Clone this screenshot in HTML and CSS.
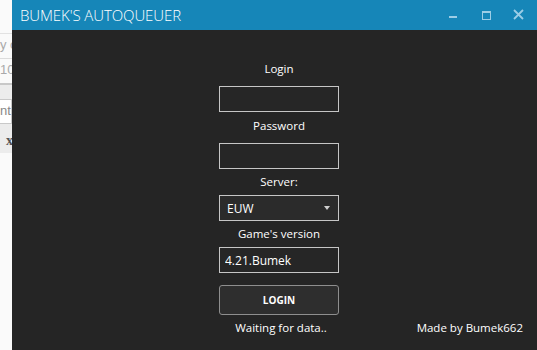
FILE: index.html
```html
<!DOCTYPE html>
<html lang="en">
<head>
    <meta charset="UTF-8">
    <meta name="viewport" content="width=device-width, initial-scale=1.0">
    <title>Bumek's Autoqueuer</title>
<link rel="stylesheet" href="styles.css">
</head>
<body>
    <div class="behind">
        <div class="behind-top"></div>
        <div class="behind-line">y c</div>
        <div class="behind-line">10</div>
        <div class="behind-gray">
            <div class="behind-box">nt</div>
            <div class="behind-x">x</div>
        </div>
    </div>
    <div class="window">
        <div class="title-bar">
            <div class="title">BUMEK'S AUTOQUEUER</div>
            <div class="controls">
                <svg width="30" height="30" viewBox="0 0 30 30"><rect x="9" y="16" width="8" height="2" fill="#9ccde6"/></svg>
                <svg width="30" height="30" viewBox="0 0 30 30"><rect x="10.5" y="11.5" width="8" height="8" fill="none" stroke="#9ccde6"/><rect x="10" y="11" width="9" height="2" fill="#9ccde6"/></svg>
                <svg width="30" height="30" viewBox="0 0 30 30"><path d="M10 10 L19 19 M19 10 L10 19" stroke="#9ccde6" stroke-width="1.8"/></svg>
            </div>
        </div>
        <div class="content">
            <div></div>
            <div class="login-form">
                <div class="label label-login">Login</div>
                <input class="field" type="text">
                <div class="label label-password">Password</div>
                <input class="field" type="password">
                <div class="label label-small">Server:</div>
                <div class="field select-box">
                    <span>EUW</span>
                    <span class="arrow"></span>
                </div>
                <div class="label label-small">Game's version</div>
                <input class="field" type="text" value="4.21.Bumek">
                <button class="login-button">LOGIN</button>
                <div class="label status">Waiting for data..</div>
            </div>
            <div class="credit">Made by Bumek662</div>
        </div>
    </div>
</body>
</html>
```

FILE: styles.css
```css
body{
    margin:0;
    width:537px;
    height:350px;
    display:flex;
    overflow:hidden;
    font-family:"Open Sans", sans-serif;
    background-color:#fafafa;
}
.behind{
    width:12px;
    display:flex;
    flex-direction:column;
    overflow:hidden;
    color:#a9a9a9;
    font-size:13px;
    font-family:"Liberation Sans", sans-serif;
    white-space:nowrap;
}
.behind-top{
    height:33px;
    border-bottom:1px solid #e2e2e2;
}
.behind-line{
    height:24px;
    line-height:22px;
    border-bottom:1px solid #dcdcdc;
}
.behind-line + .behind-line{
    border-bottom:2px solid #c8c8c8;
}
.behind-gray{
    height:68px;
    background-color:#ececec;
    padding-top:14px;
    box-sizing:border-box;
}
.behind-box{
    height:23px;
    line-height:22px;
    background-color:white;
    border:1px solid #c9c9c9;
    border-left:none;
    color:#888;
}
.behind-x{
    margin-top:9px;
    padding-left:6px;
    color:#555;
    font-weight:bold;
    font-family:"Liberation Serif", serif;
    font-size:14px;
}
.window{
    flex:1;
    display:flex;
    flex-direction:column;
    background-color:#252525;
    color:white;
}
.title-bar{
    height:30px;
    background-color:#1686b8;
    display:flex;
    align-items:center;
    justify-content:space-between;
}
.title{
    font-size:15px;
    font-weight:300;
    padding-left:8px;
    letter-spacing:-0.1px;
}
.controls{
    display:flex;
    gap:2px;
    padding-right:3px;
}
.controls svg{
    display:block;
}
.content{
    flex:1;
    display:grid;
    grid-template-columns:1fr 120px 1fr;
    padding-left:9px;
    padding-bottom:14px;
}
.login-form{
    display:flex;
    flex-direction:column;
    align-items:center;
    padding-top:31px;
}
.label{
    font-size:11.5px;
    line-height:16px;
}
.label-login{
    margin-bottom:9px;
}
.label-password{
    margin:6px 0 9px;
}
.label-small{
    margin:5px 0 5px;
}
.field{
    width:120px;
    height:26px;
    box-sizing:border-box;
    border:1px solid #c6c6c6;
    background-color:#262626;
    color:white;
    font-family:"Open Sans", sans-serif;
    font-size:12px;
    padding:0 5px;
    outline:none;
    margin:0;
}
.select-box{
    display:flex;
    align-items:center;
    justify-content:space-between;
    background-color:#2b2b2b;
    padding:0 8px 0 7px;
}
.arrow{
    width:0;
    height:0;
    border-left:3px solid transparent;
    border-right:3px solid transparent;
    border-top:4px solid #cfcfcf;
}
.login-button{
    margin-top:12px;
    width:120px;
    height:30px;
    border:1px solid #8e8e8e;
    border-radius:3px;
    background-color:#2e2e2e;
    color:white;
    font-family:"Open Sans", sans-serif;
    font-weight:bold;
    font-size:10px;
    cursor:pointer;
}
.status{
    margin-top:5px;
    padding-left:4px;
}
.credit{
    align-self:end;
    justify-self:end;
    padding-right:14px;
    font-size:11.5px;
    line-height:16px;
}
```
